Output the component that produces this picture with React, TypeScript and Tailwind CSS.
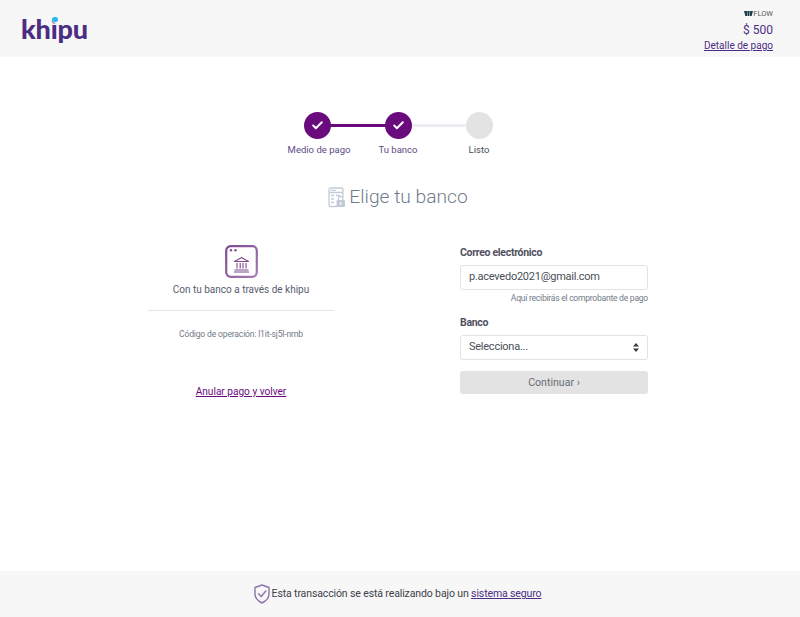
import { Check } from "lucide-react";

const steps = [
  { label: "Medio de pago", done: true },
  { label: "Tu banco", done: true },
  { label: "Listo", done: false },
];

function Logo() {
  return (
    <div className="relative ml-[21px] mt-[11px] h-[36px] w-[70px] font-['Lato',sans-serif] text-[27px] font-black leading-[36px] tracking-[-0.2px] text-[#4b2d83]">
      khipu
      <span className="absolute left-[30.5px] top-[5px] h-[7px] w-[7px] rounded-full bg-[#f7f7f7]" />
      <span className="absolute left-[31px] top-[5.5px] h-[5.5px] w-[5.5px] rounded-full bg-[#27b9ef]" />
    </div>
  );
}

function Stepper() {
  return (
    <div className="flex w-[243px] justify-center">
      {steps.map((step, i) => (
        <div key={step.label} className="relative flex w-[81px] flex-col items-center">
          {i < 2 && (
            <div className={`absolute left-[40px] top-[12px] h-[3px] w-[81px] ${i === 0 ? "bg-[#6a0b7d]" : "bg-[#ebedf0]"}`} />
          )}
          <div className={`relative flex h-[27px] w-[27px] items-center justify-center rounded-full ${step.done ? "bg-[#6a0b7d]" : "bg-[#e3e3e3]"}`}>
            {step.done && <Check size={13} strokeWidth={3.5} className="text-white" />}
          </div>
          <span className={`mt-[4px] whitespace-nowrap text-[9.5px] leading-[13px] ${i === 0 ? "ml-[4px]" : ""} ${step.done ? "text-[#5c4a86]" : "text-[#4a4f5a]"}`}>
            {step.label}
          </span>
        </div>
      ))}
    </div>
  );
}

function LockForm() {
  return (
    <svg width="18" height="21" viewBox="0 0 18 21" fill="none" stroke="#c3ccd6" strokeWidth="1.3">
      <path d="M9 19.5H2.5a1.5 1.5 0 0 1-1.5-1.5V2.5A1.5 1.5 0 0 1 2.5 1h11A1.5 1.5 0 0 1 15 2.5V10" />
      <path d="M1 5.5h14M3 3.3h5M3 8.5h3M8 8.5h4M3 12h3M3 15.5h3" />
      <rect x="8.5" y="13" width="8.5" height="7" rx="1" fill="#c3ccd6" stroke="none" />
      <path d="M10.5 13v-1.5a2.2 2.2 0 0 1 4.4 0V13" />
      <circle cx="12.7" cy="16.5" r="1" fill="#fff" stroke="none" />
    </svg>
  );
}

function BankWindow() {
  return (
    <svg width="33" height="33" viewBox="0 0 33 33" fill="none">
      <defs>
        <linearGradient id="bw" x1="0" y1="0" x2="1" y2="1">
          <stop offset="0" stopColor="#7d4a90" />
          <stop offset="1" stopColor="#a57cb2" />
        </linearGradient>
      </defs>
      <rect x="1.2" y="1.2" width="30.6" height="30.6" rx="4.5" stroke="url(#bw)" strokeWidth="2.2" />
      <path d="M1.5 9h30" stroke="url(#bw)" strokeWidth="2" />
      <circle cx="6" cy="5.2" r="1.2" fill="#7d4a90" />
      <circle cx="10.5" cy="5.2" r="1.2" fill="#7d4a90" />
      <path d="M16.5 12.5 9.5 16.5h14Z" stroke="#7d4a90" strokeWidth="1.1" strokeLinejoin="round" />
      <path d="M12 18v5.5M15.2 18v5.5M18 18v5.5M21 18v5.5M9.5 25h14M9 27h15" stroke="#7d4a90" strokeWidth="1.1" />
    </svg>
  );
}

function Shield() {
  return (
    <svg width="16" height="20" viewBox="0 0 16 20" fill="none" stroke="#8a75ad" strokeWidth="1.4">
      <path d="M8 1 15 3.5V10c0 4-3 7-7 9-4-2-7-5-7-9V3.5Z" strokeLinejoin="round" />
      <path d="M4.5 9.8 7.2 12.5 11.8 7" strokeLinecap="round" strokeLinejoin="round" />
    </svg>
  );
}

function SelectArrows() {
  return (
    <svg width="6" height="9" viewBox="0 0 6 9" fill="#343a40">
      <path d="M3 0 6 3.5H0ZM3 9 0 5.5H6Z" />
    </svg>
  );
}

function FlowMark() {
  return (
    <svg width="9" height="5" viewBox="0 0 9 5" fill="#1d3a4a">
      <path d="M0 0h2.8L3.4 5H1.4ZM3.2 0h2.6L5 5H3.9ZM6.2 0H9L7.6 5H5.6Z" />
    </svg>
  );
}

export default function App() {
  return (
    <div className="flex min-h-[617px] flex-col bg-white font-['Roboto',sans-serif]">
      <header className="flex h-[57px] justify-between bg-[#f7f7f7]">
        <Logo />
        <div className="mr-[27px] flex flex-col items-end pt-[9px]">
          <div className="flex h-[9px] items-center">
            <FlowMark />
            <span className="text-[7.5px] leading-[9px] text-[#555]">FLOW</span>
          </div>
          <span className="mt-[4px] text-[12px] leading-[17px] text-[#4b2d83]">$ 500</span>
          <a href="#" className="text-[10px] leading-[14px] text-[#4b2d83] underline">Detalle de pago</a>
        </div>
      </header>

      <main className="flex flex-1 flex-col items-center pr-[4px] pt-[55px]">
        <Stepper />
        <div className="mt-[27px] flex items-center gap-[3px]">
          <LockForm />
          <h1 className="text-[19.2px] font-light leading-[28px] text-[#6f7b8a]">Elige tu banco</h1>
        </div>

        <div className="mt-[28px] flex w-[500px] justify-between">
          <div className="flex w-[186px] flex-col items-center pt-[6px]">
            <BankWindow />
            <p className="mt-[5px] text-[10px] leading-[14px] text-[#565d6c]">Con tu banco a través de khipu</p>
            <div className="mt-[13px] h-px w-full bg-[#e6e6e6]" />
            <p className="mt-[18px] text-[8.6px] leading-[11px] tracking-[-0.18px] text-[#727a86]">Código de operación: l1it-sj5l-nmb</p>
            <a href="#" className="mt-[45px] text-[10.1px] leading-[14px] text-[#6a0b7d] underline">Anular pago y volver</a>
          </div>

          <form className="w-[188px] pt-[7px]">
            <label className="block text-[10.5px] font-bold leading-[13px] tracking-[-0.3px] text-[#50505f]">Correo electrónico</label>
            <div className="mt-[6px] flex h-[25px] items-center rounded-[3px] border border-[#dfe2e6] px-[8px] text-[11px] tracking-[-0.25px] text-[#495057]">
              p.acevedo2021@gmail.com
            </div>
            <p className="mt-[2px] text-right text-[8.6px] leading-[12px] tracking-[-0.27px] text-[#727a86]">Aquí recibirás el comprobante de pago</p>
            <label className="mt-[12px] block text-[10.5px] font-bold leading-[13px] tracking-[-0.3px] text-[#50505f]">Banco</label>
            <div className="mt-[6px] flex h-[25px] items-center justify-between rounded-[3px] border border-[#dfe2e6] px-[8px] text-[11px] tracking-[-0.25px] text-[#495057]">
              Selecciona...
              <SelectArrows />
            </div>
            <button type="button" className="mt-[11px] h-[23px] w-full rounded-[3px] bg-[#e3e3e3] text-[10.6px] text-[#666c75]">
              Continuar ›
            </button>
          </form>
        </div>
      </main>

      <footer className="flex h-[46px] items-center justify-center gap-[2px] bg-[#f7f7f7] pr-[5px] text-[10.5px] tracking-[-0.12px] text-[#3d3f4a]">
        <Shield />
        <span>
          Esta transacción se está realizando bajo un{" "}
          <a href="#" className="text-[#4b2d83] underline">sistema seguro</a>
        </span>
      </footer>
    </div>
  );
}
